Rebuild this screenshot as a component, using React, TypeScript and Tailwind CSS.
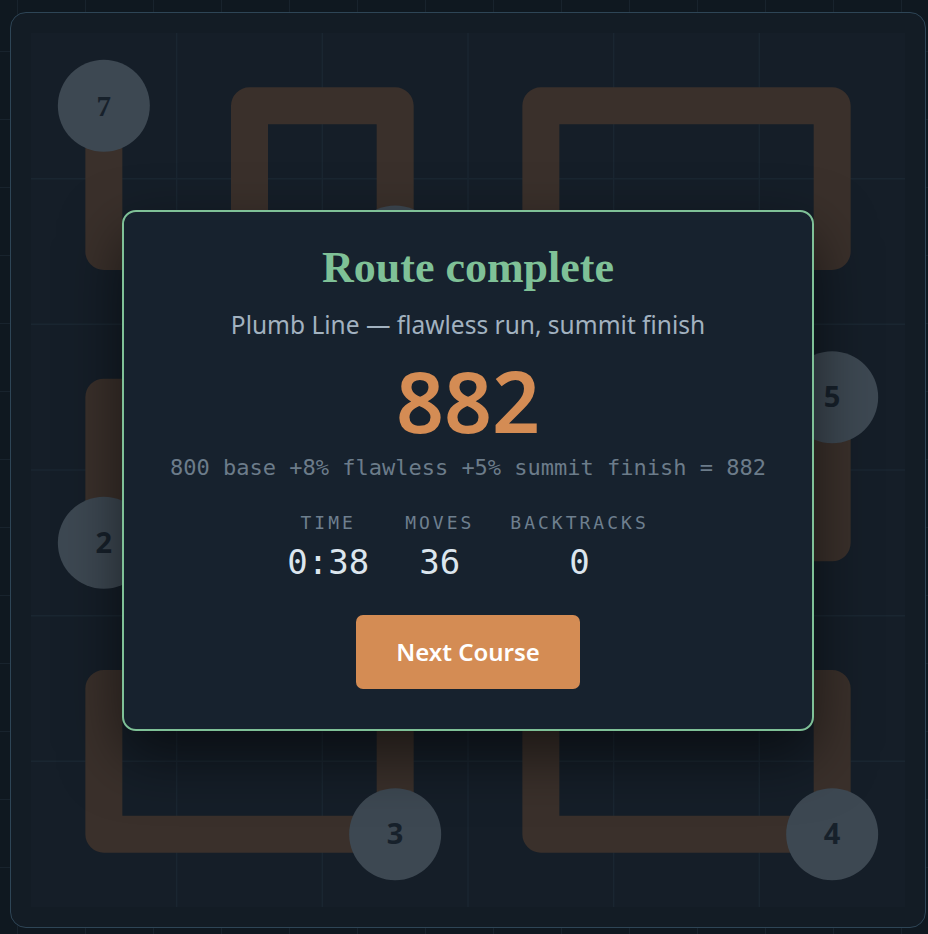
import React from 'react';

const SANS = "font-['Noto_Sans',sans-serif]";
const MONO = "font-['DejaVu_Sans_Mono',monospace]";
const SERIF = "font-['Liberation_Serif',serif]";

const SIZE = 874;
const CELL = SIZE / 6;
const at = (i: number) => CELL / 2 + CELL * i;

// the finished route, cell by cell (col, row)
const route: [number, number][] = [
    [3, 2], [2, 2], [1, 2], [0, 2], [0, 3], [1, 3], [1, 4], [0, 4], [0, 5], [1, 5], [2, 5], [2, 4],
    [2, 3], [3, 3], [3, 4], [3, 5], [4, 5], [5, 5], [5, 4], [4, 4], [4, 3], [5, 3], [5, 2], [4, 2],
    [4, 1], [5, 1], [5, 0], [4, 0], [3, 0], [3, 1], [2, 1], [2, 0], [1, 0], [1, 1], [0, 1], [0, 0],
];

// hidden ones sit under the result card, so their labels are left out
const checkpoints = [
    { n: 1, c: 3, r: 2, hidden: true },
    { n: 2, c: 0, r: 3 },
    { n: 3, c: 2, r: 5 },
    { n: 4, c: 5, r: 5 },
    { n: 5, c: 5, r: 2 },
    { n: 6, c: 2, r: 1, hidden: true },
    { n: 7, c: 0, r: 0 },
];

const stats = [
    { label: 'TIME', value: '0:38' },
    { label: 'MOVES', value: '36' },
    { label: 'BACKTRACKS', value: '0' },
];

function Board() {
    const points = route.map(([c, r]) => `${at(c)},${at(r)}`).join(' ');
    return (
        <svg width={SIZE} height={SIZE} viewBox={`0 0 ${SIZE} ${SIZE}`} className="block">
            <rect x={0} y={0} width={SIZE} height={SIZE} fill="#151e28" />
            {[1, 2, 3, 4, 5].map((k) => (
                <g key={k} stroke="#1a2631" strokeWidth={1.5}>
                    <line x1={CELL * k} y1={0} x2={CELL * k} y2={SIZE} />
                    <line x1={0} y1={CELL * k} x2={SIZE} y2={CELL * k} />
                </g>
            ))}
            <polyline
                points={points}
                fill="none"
                stroke="#3a302b"
                strokeWidth={37}
                strokeLinejoin="round"
                strokeLinecap="round"
            />
            {checkpoints.map((p) => (
                <g key={p.n}>
                    <circle cx={at(p.c)} cy={at(p.r)} r={46} fill="#3d4852" />
                    {!p.hidden && (
                        <text
                            x={at(p.c)}
                            y={at(p.r) + 10}
                            textAnchor="middle"
                            fontSize={29}
                            fontWeight={700}
                            fill="#17212b"
                            fontFamily={p.n === 7 ? 'Liberation Serif, serif' : 'Noto Sans, sans-serif'}
                        >
                            {p.n}
                        </text>
                    )}
                </g>
            ))}
        </svg>
    );
}

export default function App() {
    return (
        <div className="w-[928px] h-[934px] pt-[12px] pl-[10px] bg-[#0f1820] bg-[linear-gradient(to_right,#18232d_1px,transparent_1px),linear-gradient(to_bottom,#18232d_1px,transparent_1px)] bg-[size:68px_68px] bg-[position:17px_51px]">
            <div className="relative w-[916px] h-[916px] rounded-[16px] border-[1.5px] border-[#2e4556] bg-[#131c25] p-[19.5px]">
                <Board />

                {/* Result overlay */}
                <div className="absolute inset-0 flex items-center justify-center">
                    <div className="w-[692px] flex flex-col items-center rounded-[14px] border-2 border-[#7fc197] bg-[#17222e] pt-[34px] pb-[40px] shadow-[0_24px_60px_rgba(0,0,0,0.55)]">
                        <h2 className={`${SERIF} text-[44px] leading-[44px] font-bold text-[#7fc197]`}>Route complete</h2>
                        <p className={`${SANS} mt-[20px] text-[24.5px] leading-[30px] text-[#a2b2c0]`}>
                            Plumb Line — flawless run, summit finish
                        </p>
                        <div className={`${SANS} mt-[19px] text-[84px] leading-[84px] font-semibold text-[#d48c54]`}>882</div>
                        <div className={`${MONO} mt-[11px] text-[22px] leading-[28px] text-[#6c7c8a]`}>
                            800 base +8% flawless +5% summit finish = 882
                        </div>

                        <div className="mt-[29px] flex gap-[36px]">
                            {stats.map((s) => (
                                <div key={s.label} className="flex flex-col items-center">
                                    <span className={`${MONO} text-[18px] leading-[24px] tracking-[3px] text-[#6e7f8e]`}>{s.label}</span>
                                    <span className={`${MONO} mt-[7px] text-[34px] leading-[40px] text-[#dce6ee]`}>{s.value}</span>
                                </div>
                            ))}
                        </div>

                        <button className={`${SANS} mt-[33px] w-[224px] h-[74px] rounded-[7px] bg-[#d48c54] text-[24px] font-semibold text-white`}>
                            Next Course
                        </button>
                    </div>
                </div>
            </div>
        </div>
    );
}
